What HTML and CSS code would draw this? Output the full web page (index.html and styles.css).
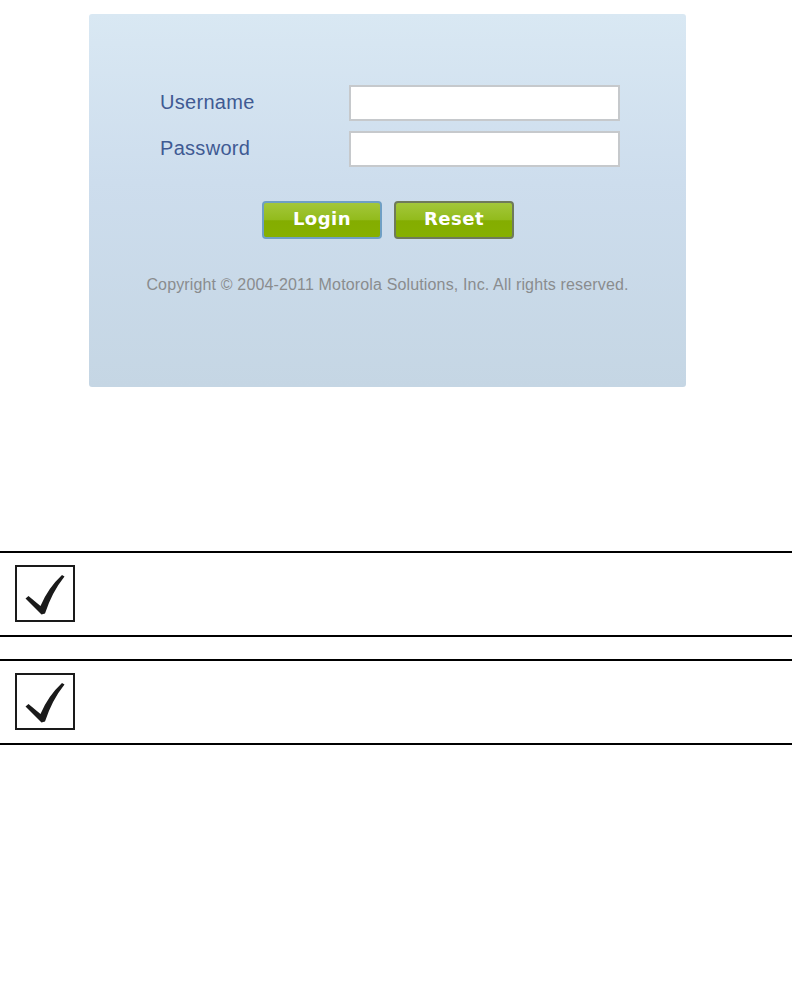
FILE: index.html
```html
<!DOCTYPE html>
<html lang="en">
<head>
  <meta charset="UTF-8">
  <title>Login</title>
  <link rel="stylesheet" href="styles.css">
</head>
<body>
  <div class="login-panel">
    <div class="login-form">
      <label class="field-label" for="user">Username</label>
      <input class="field-input" id="user" type="text">
      <label class="field-label" for="pass">Password</label>
      <input class="field-input" id="pass" type="password">
    </div>
    <div class="buttons">
      <button class="btn btn-login">Login</button>
      <button class="btn btn-reset">Reset</button>
    </div>
    <div class="copyright">Copyright &copy; 2004-2011 Motorola Solutions, Inc. All rights reserved.</div>
  </div>

  <div class="notes">
    <div class="note">
      <div class="note-icon">
        <svg width="56" height="53" viewBox="0 0 56 53">
          <path d="M8.5 31.5 L11.5 29 L23.5 39 Q31 21 45 8 L47.5 9.5 Q35 25 28 46.5 L24.5 47.5 Z" fill="#1a1a1a"/>
        </svg>
      </div>
    </div>
    <div class="note">
      <div class="note-icon">
        <svg width="56" height="53" viewBox="0 0 56 53">
          <path d="M8.5 31.5 L11.5 29 L23.5 39 Q31 21 45 8 L47.5 9.5 Q35 25 28 46.5 L24.5 47.5 Z" fill="#1a1a1a"/>
        </svg>
      </div>
    </div>
  </div>
</body>
</html>
```

FILE: styles.css
```css
html, body {
  margin: 0;
  background: #fff;
  font-family: 'Liberation Sans', Arial, sans-serif;
}
.login-panel {
  margin: 14px 0 0 89px;
  width: 597px;
  height: 373px;
  box-sizing: border-box;
  padding-top: 71px;
  border-radius: 3px;
  background: linear-gradient(180deg, #d9e8f3 0%, #cddded 45%, #c5d6e4 100%);
}
.login-form {
  display: grid;
  grid-template-columns: 189px 271px;
  row-gap: 10px;
  padding-left: 71px;
  align-items: center;
}
.field-label {
  font-size: 20px;
  letter-spacing: 0.3px;
  color: #3f5a93;
  margin-top: -2px;
}
.field-input {
  box-sizing: border-box;
  height: 36px;
  width: 271px;
  margin: 0;
  border: 2px solid #c6c9cc;
  background: #fff;
  outline: none;
}
.buttons {
  display: flex;
  justify-content: center;
  gap: 12px;
  margin-top: 34px;
  padding-left: 1px;
}
.btn {
  width: 120px;
  height: 38px;
  box-sizing: border-box;
  border-radius: 4px;
  border: 2px solid #6f7a5a;
  background: linear-gradient(180deg, #a3c73a 0%, #92bb1c 50%, #84ad00 52%, #86b000 100%);
  color: #fff;
  font-family: 'DejaVu Sans', Verdana, sans-serif;
  font-weight: bold;
  font-size: 18px;
  letter-spacing: 0.5px;
  padding: 0 0 3px;
  cursor: pointer;
}
.btn-login {
  border-color: #6f9fc4;
}
.copyright {
  margin-top: 37px;
  text-align: center;
  font-size: 16px;
  letter-spacing: 0.15px;
  color: #8a8c8e;
}
.notes {
  margin-top: 164px;
  display: flex;
  flex-direction: column;
  gap: 22px;
}
.note {
  height: 86px;
  box-sizing: border-box;
  border-top: 2px solid #000;
  border-bottom: 2px solid #000;
  padding: 12px 0 0 15px;
}
.note-icon {
  width: 60px;
  height: 57px;
  box-sizing: border-box;
  border: 2px solid #1a1a1a;
}
.note-icon svg {
  display: block;
}
```
